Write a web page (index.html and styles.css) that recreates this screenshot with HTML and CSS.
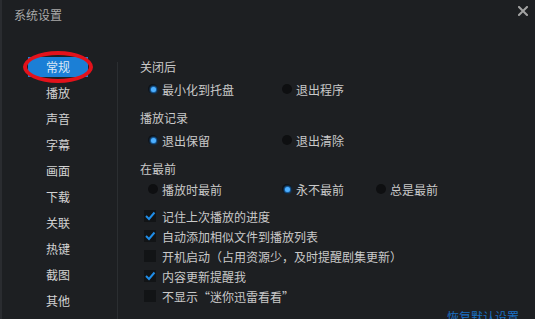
FILE: index.html
```html
<!DOCTYPE html>
<html lang="zh-CN">
<head>
<meta charset="utf-8">
<title>系统设置</title>
<link rel="stylesheet" href="styles.css">
</head>
<body>
<div class="window">
  <header class="titlebar">
    <span class="title">系统设置</span>
    <svg class="close" width="10" height="10" viewBox="0 0 10 10"><path d="M1 1L9 9M9 1L1 9" stroke="#a3a3a3" stroke-width="2" stroke-linecap="square"/></svg>
  </header>
  <div class="main">
    <nav class="sidebar">
      <div class="nav-item selected">常规</div>
      <div class="nav-item">播放</div>
      <div class="nav-item">声音</div>
      <div class="nav-item">字幕</div>
      <div class="nav-item">画面</div>
      <div class="nav-item">下载</div>
      <div class="nav-item">关联</div>
      <div class="nav-item">热键</div>
      <div class="nav-item">截图</div>
      <div class="nav-item">其他</div>
    </nav>
    <div class="divider"></div>
    <section class="content">
      <div class="group">
        <div class="heading">关闭后</div>
        <div class="radios">
          <label class="radio on"><span class="dot"></span>最小化到托盘</label>
          <label class="radio"><span class="dot"></span>退出程序</label>
        </div>
      </div>
      <div class="group">
        <div class="heading">播放记录</div>
        <div class="radios">
          <label class="radio on"><span class="dot"></span>退出保留</label>
          <label class="radio"><span class="dot"></span>退出清除</label>
        </div>
      </div>
      <div class="group">
        <div class="heading">在最前</div>
        <div class="radios">
          <label class="radio"><span class="dot"></span>播放时最前</label>
          <label class="radio on"><span class="dot"></span>永不最前</label>
          <label class="radio"><span class="dot"></span>总是最前</label>
        </div>
      </div>
      <div class="checks">
        <label class="check on"><span class="box"><svg width="12" height="12" viewBox="0 0 12 12"><path d="M2 6L5 9L10.5 2.5" fill="none" stroke="#1f8ce6" stroke-width="2"/></svg></span>记住上次播放的进度</label>
        <label class="check on"><span class="box"><svg width="12" height="12" viewBox="0 0 12 12"><path d="M2 6L5 9L10.5 2.5" fill="none" stroke="#1f8ce6" stroke-width="2"/></svg></span>自动添加相似文件到播放列表</label>
        <label class="check"><span class="box"></span>开机启动（占用资源少，及时提醒剧集更新）</label>
        <label class="check on"><span class="box"><svg width="12" height="12" viewBox="0 0 12 12"><path d="M2 6L5 9L10.5 2.5" fill="none" stroke="#1f8ce6" stroke-width="2"/></svg></span>内容更新提醒我</label>
        <label class="check"><span class="box"></span>不显示“迷你迅雷看看”</label>
      </div>
      <div class="footer"><a class="reset">恢复默认设置</a></div>
    </section>
  </div>
</div>
</body>
</html>
```
FILE: styles.css
```css
* { box-sizing: border-box; }
html, body {
  margin: 0;
  padding: 0;
  width: 535px;
  height: 319px;
  overflow: hidden;
  background: #1d1f22;
}
body {
  font-family: "Noto Sans CJK SC", "Noto Sans", sans-serif;
  font-size: 12px;
  color: #c9c9c9;
}
.window {
  width: 535px;
  height: 319px;
  border-left: 2px solid #2a2c30;
  background: #1d1f22;
}
.titlebar {
  display: flex;
  justify-content: space-between;
  align-items: flex-start;
  height: 54px;
  padding: 7px 7px 0 12px;
}
.title {
  line-height: 16px;
  color: #a9a9a9;
}
.close {
  margin-top: -1px;
  display: block;
}
.main {
  display: flex;
  height: 265px;
}
.sidebar {
  width: 115px;
  padding: 3px 0 0 26px;
  display: flex;
  flex-direction: column;
  gap: 6px;
}
.nav-item {
  width: 60px;
  height: 20px;
  line-height: 20px;
  text-align: center;
  color: #d2d2d2;
  position: relative;
}
.nav-item.selected {
  background: #1b7fd6;
  color: #dbe8f5;
}
.nav-item.selected::after {
  content: "";
  position: absolute;
  left: -5px;
  right: -5px;
  top: -6px;
  bottom: -6px;
  border: 4px solid #e3121b;
  border-radius: 50%;
}
.divider {
  width: 1px;
  margin-top: 8px;
  background: #2b2e31;
}
.content {
  flex: 1;
  padding: 3px 0 0 22px;
  display: flex;
  flex-direction: column;
}
.group { margin-bottom: 9px; }
.group:nth-child(3) { margin-bottom: 7px; }
.heading {
  line-height: 20px;
  height: 20px;
}
.radios {
  display: grid;
  grid-template-columns: 134px 94px auto;
  margin-top: 2px;
  padding-left: 8px;
}
.group:nth-child(3) .radios { margin-top: 0; }
.radio {
  display: flex;
  align-items: center;
  height: 20px;
  gap: 4px;
}
.dot {
  width: 10px;
  height: 10px;
  border-radius: 50%;
  background: #0e0f11;
  display: flex;
  align-items: center;
  justify-content: center;
}
.radio.on .dot::after {
  content: "";
  width: 5px;
  height: 5px;
  border-radius: 50%;
  background: #4fb0ff;
  box-shadow: 0 0 2px 1px #1f7fd8;
}
.checks {
  display: flex;
  flex-direction: column;
  padding-left: 4px;
}
.check {
  display: flex;
  align-items: center;
  height: 20px;
  gap: 6px;
}
.box {
  width: 12px;
  height: 12px;
  background: #121416;
  display: block;
}
.box svg { display: block; }
.footer {
  display: flex;
  justify-content: flex-end;
  padding-right: 16px;
  margin-top: 1px;
}
.reset {
  color: #1a70c4;
  line-height: 20px;
}
```
